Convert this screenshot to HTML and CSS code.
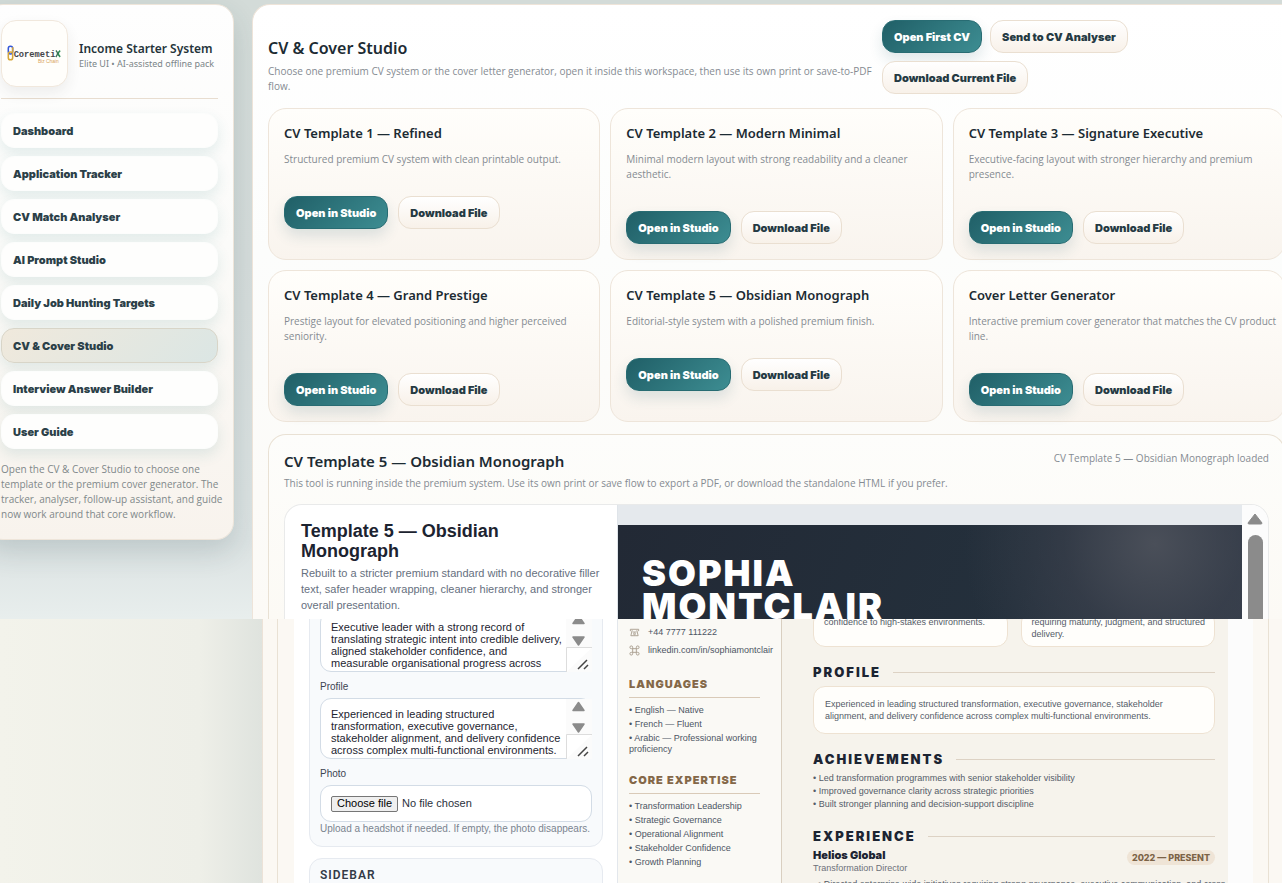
FILE: index.html
```html
<!DOCTYPE html>
<html lang="en">
<head>
<meta charset="utf-8">
<title>CV &amp; Cover Studio</title>
<link rel="stylesheet" href="styles.css">
</head>
<body>
<div class="app">
  <aside class="sidebar">
    <div class="brand">
      <div class="logo">
        <svg viewBox="0 0 67 67" width="65" height="65" role="img" aria-label="Coremetix Biz Chain">
          <g fill="none" stroke-width="1.6">
            <rect x="6.5" y="26" width="4.5" height="8" rx="2.2" stroke="#3558d8"/>
            <rect x="6.5" y="32" width="4.5" height="8" rx="2.2" stroke="#d6a73a"/>
            <path d="M11 27v5" stroke="#d6a73a"/>
          </g>
          <text x="12" y="37" class="logo-name">Coremeti</text>
          <path d="M60 30.500Q56 33.500 60 37" stroke="#2c8b57" stroke-width="1.600" fill="none"/><path d="M55.500 30.500Q59 33.500 55.500 37" stroke="#3a6b52" stroke-width="1.400" fill="none"/>
          <text x="37" y="43" class="logo-sub">Biz Chain</text>
        </svg>
      </div>
      <div class="brand-text">
        <h1 class="brand-name">Income Starter System</h1>
        <p class="brand-sub">Elite UI • AI-assisted offline pack</p>
      </div>
    </div>
    <nav class="nav">
      <button>Dashboard</button>
      <button>Application Tracker</button>
      <button>CV Match Analyser</button>
      <button>AI Prompt Studio</button>
      <button>Daily Job Hunting Targets</button>
      <button class="active">CV &amp; Cover Studio</button>
      <button>Interview Answer Builder</button>
      <button>User Guide</button>
    </nav>
    <p class="note">Open the CV &amp; Cover Studio to choose one template or the premium cover generator. The tracker, analyser, follow-up assistant, and guide now work around that core workflow.</p>
  </aside>

  <main class="main">
    <header class="head">
      <div class="head-text">
        <h2>CV &amp; Cover Studio</h2>
        <p class="muted">Choose one premium CV system or the cover letter generator, open it inside this workspace, then use its own print or <span class="keep">save-to-PDF</span> flow.</p>
      </div>
      <div class="head-actions">
        <button class="btn primary">Open First CV</button>
        <button class="btn">Send to CV Analyser</button>
        <button class="btn">Download Current File</button>
      </div>
    </header>

    <section class="cards">
      <article class="card"><h3>CV Template 1 — Refined</h3><p class="muted">Structured premium CV system with clean printable output.</p><div class="actions"><button class="btn primary">Open in Studio</button><button class="btn">Download File</button></div></article>
      <article class="card"><h3>CV Template 2 — Modern Minimal</h3><p class="muted">Minimal modern layout with strong readability and a cleaner aesthetic.</p><div class="actions"><button class="btn primary">Open in Studio</button><button class="btn">Download File</button></div></article>
      <article class="card"><h3>CV Template 3 — Signature Executive</h3><p class="muted">Executive-facing layout with stronger hierarchy and premium presence.</p><div class="actions"><button class="btn primary">Open in Studio</button><button class="btn">Download File</button></div></article>
      <article class="card"><h3>CV Template 4 — Grand Prestige</h3><p class="muted">Prestige layout for elevated positioning and higher perceived seniority.</p><div class="actions"><button class="btn primary">Open in Studio</button><button class="btn">Download File</button></div></article>
      <article class="card"><h3>CV Template 5 — Obsidian Monograph</h3><p class="muted">Editorial-style system with a polished premium finish.</p><div class="actions"><button class="btn primary">Open in Studio</button><button class="btn">Download File</button></div></article>
      <article class="card"><h3>Cover Letter Generator</h3><p class="muted">Interactive premium cover generator that matches the CV product line.</p><div class="actions"><button class="btn primary">Open in Studio</button><button class="btn">Download File</button></div></article>
    </section>

    <section class="viewer">
      <div class="viewer-head">
        <h2>CV Template 5 — Obsidian Monograph</h2>
        <span class="muted">CV Template 5 — Obsidian Monograph loaded</span>
      </div>
      <p class="muted">This tool is running inside the premium system. Use its own print or save flow to export a PDF, or download the standalone HTML if you prefer.</p>
      <div class="frame">
        <div class="intro">
          <h2>Template 5 — Obsidian Monograph</h2>
          <p>Rebuilt to a stricter premium standard with no decorative filler text, safer header wrapping, cleaner hierarchy, and stronger overall presentation.</p>
        </div>
        <div class="stage">
          <div class="hero"><h1>SOPHIA<br>MONTCLAIR</h1></div>
        </div>
        <div class="scroll">
          <svg viewBox="0 0 16 12" width="16" height="12"><path d="M8 1L15 10Q15 11 14 11H2Q1 11 1 10Z" fill="#8b8b8b" stroke="#8b8b8b"/></svg>
          <div class="thumb"></div>
        </div>
      </div>
    </section>
  </main>
</div>

<div class="lower">
  <div class="panel">
    <div class="editor">
      <div class="form">
        <section class="group">
          <div class="area">
            <textarea aria-label="Summary">Executive leader with a strong record of translating strategic intent into credible delivery, aligned stakeholder confidence, and measurable organisational progress across</textarea>
            <svg class="area-scroll" viewBox="0 0 26 60" width="26" height="60"><path d="M0 0h26v60H0z" fill="#fbfbfb"/><path d="M12.500 3.500L18 11.500H7zM12.500 33L7 25H18z" fill="#8b8b8b" stroke="#8b8b8b" stroke-width="1.500" stroke-linejoin="round"/><path d="M.5 60V35.500H26" fill="#fff" stroke="#ddd"/><path d="M12 57L21 48M18 57L22 53" stroke="#444" stroke-width="1.500"/></svg>
          </div>
          <label for="profile">Profile</label>
          <div class="area">
            <textarea id="profile">Experienced in leading structured transformation, executive governance, stakeholder alignment, and delivery confidence across complex multi-functional environments.</textarea>
            <svg class="area-scroll" viewBox="0 0 26 60" width="26" height="60"><path d="M0 0h26v60H0z" fill="#fbfbfb"/><path d="M12.500 3.500L18 11.500H7zM12.500 33L7 25H18z" fill="#8b8b8b" stroke="#8b8b8b" stroke-width="1.500" stroke-linejoin="round"/><path d="M.5 60V35.500H26" fill="#fff" stroke="#ddd"/><path d="M12 57L21 48M18 57L22 53" stroke="#444" stroke-width="1.500"/></svg>
          </div>
          <label for="photo">Photo</label>
          <div class="file"><button id="photo">Choose file</button><span>No file chosen</span></div>
          <p class="help">Upload a headshot if needed. If empty, the photo disappears.</p>
        </section>
        <section class="group"><h3>SIDEBAR</h3></section>
      </div>
      <div class="cv-side">
        <ul class="contact">
          <li><svg viewBox="0 0 12 12" width="11" height="11" fill="none" stroke="#a79c8d"><path d="M1.500 4.500V2.500H10.500V4.500M3.500 3.500L2 9.500H10L8.500 3.500M4 5.500H8"/><circle cx="6" cy="7.500" r="1"/></svg><span>+44 7777 111222</span></li>
          <li><svg viewBox="0 0 12 12" width="11" height="11" fill="none" stroke="#a79c8d"><path d="M4 4H8V8H4zM4 4H2.500A1.500 1.500 0 1 1 4 2.500zM8 4V2.500A1.500 1.500 0 1 1 9.500 4zM8 8H9.500A1.500 1.500 0 1 1 8 9.500zM4 8V9.500A1.500 1.500 0 1 1 2.500 8z"/></svg><span>linkedin.com/in/sophiamontclair</span></li>
        </ul>
        <h4>LANGUAGES</h4>
        <ul><li>• English — Native</li><li>• French — Fluent</li><li>• Arabic — Professional working proficiency</li></ul>
        <h4>CORE EXPERTISE</h4>
        <ul><li>• Transformation Leadership</li><li>• Strategic Governance</li><li>• Operational Alignment</li><li>• Stakeholder Confidence</li><li>• Growth Planning</li></ul>
      </div>
      <div class="cv-main">
        <div class="pair">
          <div class="box">confidence to high-stakes environments.</div>
          <div class="box">requiring maturity, judgment, and structured delivery.</div>
        </div>
        <h3 class="rule">PROFILE</h3>
        <div class="box summary">Experienced in leading structured transformation, executive governance, stakeholder alignment, and delivery confidence across complex multi-functional environments.</div>
        <h3 class="rule">ACHIEVEMENTS</h3>
        <ul><li>• Led transformation programmes with senior stakeholder visibility</li><li>• Improved governance clarity across strategic priorities</li><li>• Built stronger planning and decision-support discipline</li></ul>
        <h3 class="rule">EXPERIENCE</h3>
        <div class="job">
          <div><h4>Helios Global</h4><p>Transformation Director</p></div>
          <span class="date">2022 — PRESENT</span>
        </div>
        <p class="detail">• Directed enterprise-wide initiatives requiring strong governance, executive communication, and cross</p>
      </div>
      <div class="gutter"></div>
    </div>
  </div>
</div>
</body>
</html>
```

FILE: styles.css
```css
* { box-sizing: border-box; }
h1, h2, h3, h4, p, ul { margin: 0; padding: 0; }
ul { list-style: none; }
button { cursor: pointer; }

body {
  margin: 0;
  height: 100vh;
  overflow: hidden;
  display: flex;
  flex-direction: column;
  font-family: "Noto Sans", "Open Sans", sans-serif;
  font-size: 10px;
  line-height: 15px;
  color: #1c2b33;
  background: #f2f2ea;
}

.app {
  flex: none;
  display: grid;
  grid-template-columns: 249px minmax(0, 1fr);
  gap: 18px;
  align-items: start;
  margin: 0 -19px 0 -15px;
  padding-top: 4px;
  background: linear-gradient(180deg, #d3dbd8 0, #d5dcdb 260px, #dbe2e2 540px, #e8eeed 619px);
}

.sidebar {
  padding: 15px;
  border: 1px solid #eee5da;
  border-radius: 18px;
  background: linear-gradient(180deg, #fefefe 0, #fbfbf9 45%, #f8f3ed 100%);
  box-shadow: 0 12px 28px rgba(40, 70, 75, .16);
}
.brand {
  display: flex;
  align-items: center;
  gap: 11px;
  padding-bottom: 11px;
  border-bottom: 1px solid #e8ddd0;
}
.logo {
  flex: none;
  width: 67px;
  height: 67px;
  border: 1px solid #f1e8dd;
  border-radius: 15px;
  background: #fffefb;
  box-shadow: 0 6px 14px rgba(50, 50, 50, .08);
}
.logo-name { font: bold 9px "Liberation Mono", monospace; fill: #46474a; }
.logo-sub { font: 5px "Liberation Sans", sans-serif; fill: #d9a55c; }
.brand-text { padding-top: 3px; }
.brand-name { font-size: 12px; line-height: 17px; font-weight: 600; color: #25343b; white-space: nowrap; }
.brand-sub { font-size: 9px; line-height: 14px; color: #7b8588; white-space: nowrap; }

.nav { display: grid; gap: 8px; padding-top: 14px; }
.nav button {
  height: 35px;
  padding: 0 11px;
  border: 1px solid #fcfdfc;
  border-radius: 13px;
  background: #fefefd;
  box-shadow: 0 6px 14px rgba(40, 120, 120, .12);
  font: 900 11px/16px Inter, sans-serif;
  color: #2b4048;
  text-align: left;
}
.nav .active {
  border-color: #d8d5c8;
  background: linear-gradient(135deg, #f0e9dc, #dbe6e4);
}
.note { margin: 13px -8px 0 0; padding-bottom: 2px; font-family: "Open Sans", sans-serif; color: #7f888a; }
.muted { font-family: "Open Sans", sans-serif; font-size: 10px; line-height: 15px; color: #858b92; }
.keep { white-space: nowrap; }

.main {
  padding: 15px 15px 0;
  border: 1px solid #eee4d9;
  border-bottom: 0;
  border-radius: 18px 18px 0 0;
  background: linear-gradient(180deg, #fff, #fcfdfc 40%, #fcfaf6);
}
.head { display: flex; align-items: flex-end; justify-content: space-between; gap: 4px; }
.head-text { flex: 0 1 610px; }
.head h2 { font-size: 16px; line-height: 22px; font-weight: 600; margin-bottom: 5px; }
.head-actions { display: flex; flex-wrap: wrap; gap: 8px; flex: 0 0 403px; padding-right: 120px; }

.btn {
  height: 33px;
  padding: 0 11px;
  border: 1px solid #eadfd1;
  border-radius: 13px;
  background: linear-gradient(180deg, #fff, #f8f1e9);
  font: 900 11px/16px Inter, sans-serif;
  color: #253a43;
  white-space: nowrap;
}
.primary {
  border-color: #286c73;
  background: linear-gradient(135deg, #205f67, #3d8d92);
  box-shadow: 0 7px 14px rgba(32, 95, 103, .14);
  color: #fff;
}

.cards {
  display: grid;
  grid-template-columns: repeat(3, minmax(0, 1fr));
  gap: 10px;
  margin-top: 14px;
}
.card {
  padding: 15px 5px 15px 15px;
  border: 1px solid #eee5da;
  border-radius: 18px;
  background: linear-gradient(180deg, #fffefb, #f9f4ee);
}
.card h3 { font-size: 13px; line-height: 18px; font-weight: 600; margin-bottom: 10px; }
.actions { display: flex; gap: 10px; margin-top: 29px; }

.viewer {
  margin-top: 12px;
  padding: 16px 15px 0;
  border: 1px solid #e9e1d4;
  border-bottom: 0;
  border-radius: 18px 18px 0 0;
  background: linear-gradient(180deg, #fdfdfb, #fcfaf5);
}
.viewer-head { display: flex; justify-content: space-between; }
.viewer-head h2 { font-size: 15px; line-height: 20px; font-weight: 600; }
.viewer > .muted { margin-top: 5px; }
.frame {
  display: grid;
  grid-template-columns: 333px minmax(0, 1fr) 26px;
  margin-top: 13px;
  border: 1px solid #e9eaea;
  border-bottom: 0;
  border-radius: 18px 18px 0 0;
  background: #fff;
  overflow: hidden;
}
.intro {
  padding: 16px 14px 5px 16px;
  border-right: 1px solid #dfe4e9;
  font-family: "Liberation Sans", sans-serif;
}
.intro h2 { padding-right: 40px; font-size: 18px; line-height: 20px; font-weight: 700; color: #1c2330; margin-bottom: 4px; }
.intro p { font-size: 11px; line-height: 16px; color: #667080; }
.stage { display: flex; flex-direction: column; padding-top: 20px; background: #e5e9ed; }
.hero {
  flex: 1;
  padding: 32px 24px 0;
  background: radial-gradient(circle at 86% 20%, #4a4f59 0, rgba(60, 65, 77, .6) 90px, rgba(35, 44, 56, 0) 190px), linear-gradient(110deg, #222935, #24303c 65%, #333d4a);
}
.hero h1 { height: 62px; font: 900 36px/33px Inter, sans-serif; letter-spacing: 2px; color: #fff; }
.scroll { display: flex; flex-direction: column; align-items: center; padding-top: 8px; gap: 10px; background: #fcfcfc; }
.thumb { flex: 1; width: 15px; border-radius: 8px 8px 0 0; background: #8b8b8b; }

.lower {
  flex: 1;
  min-height: 0;
  overflow: hidden;
  padding-left: 262px;
  background: linear-gradient(90deg, #f3f3eb 0, #eeefe8 200px, #dfe3de 262px);
}
.panel {
  margin-right: -4px;
  padding: 0 17px 0 14px;
  border-left: 1px solid #ece2d7;
  background: #fbf8f3;
}
.editor {
  display: grid;
  grid-template-columns: 324px 164px minmax(0, 1fr) 25px;
  padding-left: 16px;
  padding-right: 15px;
  border: solid #e9e1d4;
  border-width: 0 1px;
  font-family: "Liberation Sans", sans-serif;
}
.form { display: grid; gap: 11px; align-content: start; padding: 0 14px 0 15px; border-right: 1px solid #e3e7ec; background: #fff; }
.group { padding: 10px; border: 1px solid #e6eaf0; border-radius: 13px; background: #f8fafc; }
.group:first-child { margin-top: -19px; }
.group h3 { font: 600 12px/12px Roboto, sans-serif; letter-spacing: 1px; height: 30px; color: #333b47; }
.group label { display: block; margin: 8px 0 4px; font-size: 10px; line-height: 14px; color: #3c4452; }
.area { position: relative; height: 61px; }
.area textarea {
  display: block;
  width: 100%;
  height: 61px;
  padding: 9px 26px 0 10px;
  border: 1px solid #d3dce6;
  border-radius: 11px;
  background: #fff;
  resize: none;
  overflow: hidden;
  font: 11px/12px "Liberation Sans", sans-serif;
  color: #1d2430;
}
.area-scroll { position: absolute; top: 1px; right: 0; }
.file {
  display: flex;
  align-items: center;
  gap: 4px;
  height: 37px;
  padding: 0 10px;
  border: 1px solid #d3dce6;
  border-radius: 11px;
  background: #fff;
  font-size: 11px;
  color: #2b313c;
}
.file button { height: 16px; padding: 0 5px; border: 1px solid #767676; border-radius: 2px; background: #efefef; font: 11px/13px "Liberation Sans", sans-serif; color: #000; }
.help { font-size: 10px; line-height: 14px; color: #7b848f; white-space: nowrap; }

.cv-side { padding: 4px 21px 0 11px; border-right: 1px solid #d9cfc1; background: #faf9f5; font-size: 9px; color: #4d5563; }
.cv-side li { line-height: 11px; margin-bottom: 3px; }
.cv-side .contact li { display: flex; align-items: center; gap: 8px; height: 18px; margin: 0; white-space: nowrap; }
.contact svg { flex: none; }
.cv-side h4 { margin: 19px 0 7px; padding-bottom: 7px; border-bottom: 1px solid #d9cab8; font: 900 11px/12px Inter, sans-serif; letter-spacing: 1px; color: #846848; white-space: nowrap; }

.cv-main { padding: 0 13px 0 31px; background: #f6f3ec; font-size: 9px; line-height: 12px; color: #555c68; }
.pair { display: grid; grid-template-columns: 1fr 1fr; gap: 13px; margin-top: -9px; }
.box { padding: 5px 5px 6px 10px; border: 1px solid #eee2d2; border-radius: 12px; background: #fffefb; }
.cv-main .summary { padding: 11px; }
.rule { display: flex; align-items: center; gap: 12px; margin: 18px 0 7px; font: 900 13px/14px Inter, sans-serif; letter-spacing: 2px; color: #1c2432; }
.rule::after { content: ""; flex: 1; border-top: 1px solid #ddd2c4; }
.cv-main ul { margin-top: -1px; }
.cv-main li { line-height: 13px; }
.job { display: flex; justify-content: space-between; align-items: start; margin-top: -2px; }
.job h4 { font: 900 11px/14px Inter, sans-serif; color: #1c2432; }
.job p { line-height: 13px; color: #6c7079; }
.date { margin-top: 2px; padding: 0 5px; border-radius: 8px; background: #efe4d6; font: 800 9px/15px Inter, sans-serif; color: #7c6347; }
.detail { margin-top: 3px; padding-left: 5px; white-space: nowrap; }
.gutter { background: #fcfcfc; }
```
